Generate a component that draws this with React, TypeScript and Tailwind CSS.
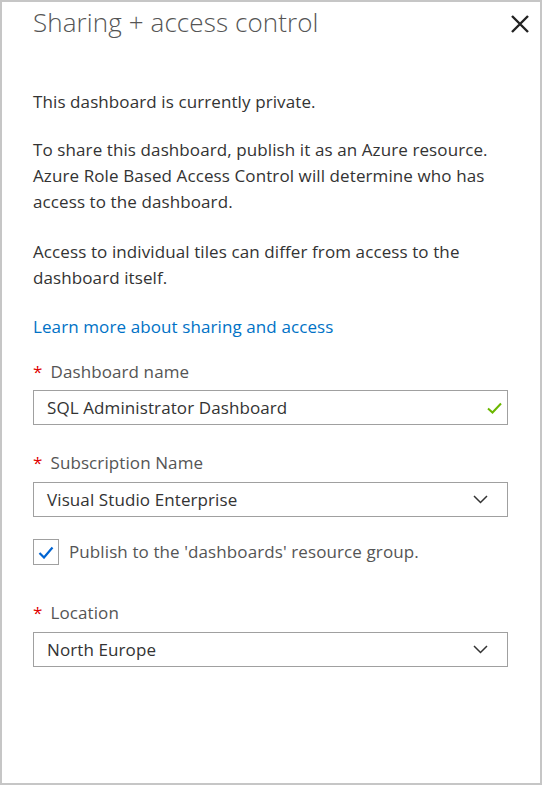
import React from "react";

const Chevron = () => (
  <svg width="15" height="9" viewBox="0 0 15 9" fill="none">
    <path d="M1 1 L7.5 7.5 L14 1" stroke="#333" strokeWidth="1.5" />
  </svg>
);

const Req = () => <span className="text-[#e00000] mr-[8px] text-[17px]">*</span>;

export default function App() {
  return (
    <div
      className="w-[542px] h-[785px] border-2 border-[#c6c6c6] bg-white text-[#333] flex flex-col"
      style={{ fontFamily: '"Open Sans", "Noto Sans", sans-serif' }}
    >
      <div className="flex items-start justify-between pl-[31px] pr-[10px] pt-[2px]">
        <h1 className="text-[26px] font-light leading-[36px] text-[#555] tracking-[0.1px]">
          Sharing + access control
        </h1>
        <svg width="20" height="20" viewBox="0 0 20 20" className="mt-[10px]">
          <path d="M2 2 L18 18 M18 2 L2 18" stroke="#222" strokeWidth="2.4" />
        </svg>
      </div>
      <div className="pl-[31px] pr-[32px] text-[17px] leading-[26px] tracking-[0.1px]">
        <p className="mt-[49px]">This dashboard is currently private.</p>
        <p className="mt-[22px]">
          To share this dashboard, publish it as an Azure resource. Azure Role Based Access Control will determine who has
          access to the dashboard.
        </p>
        <p className="mt-[24px]">
          Access to individual tiles can differ from access to the dashboard itself.
        </p>
        <p className="mt-[23px] text-[#0072c6]">Learn more about sharing and access</p>

        <div className="mt-[19px] text-[#555] leading-[26px] flex items-baseline">
          <Req />
          Dashboard name
        </div>
        <div className="mt-[5px] h-[35px] border border-[#a0a0a0] flex items-center justify-between pl-[13px] pr-[5px]">
          <span className="text-[#333]">SQL Administrator Dashboard</span>
          <svg width="15" height="12" viewBox="0 0 15 12" fill="none">
            <path d="M1 6.5 L5.5 10.5 L14 1.5" stroke="#6bb700" strokeWidth="2" />
          </svg>
        </div>

        <div className="mt-[25px] text-[#555] leading-[26px] flex items-baseline">
          <Req />
          Subscription Name
        </div>
        <div className="mt-[6px] h-[35px] border border-[#a0a0a0] flex items-center justify-between pl-[13px] pr-[19px]">
          <span className="text-[#333]">Visual Studio Enterprise</span>
          <Chevron />
        </div>

        <div className="mt-[22px] flex items-center">
          <div className="w-[26px] h-[26px] border border-[#a0a0a0] flex items-center justify-center">
            <svg width="16" height="13" viewBox="0 0 16 13" fill="none">
              <path d="M1.5 7 L6 11.5 L14.5 1.5" stroke="#0064d2" strokeWidth="2.2" />
            </svg>
          </div>
          <span className="ml-[10px] text-[#555]">Publish to the 'dashboards' resource group.</span>
        </div>

        <div className="mt-[35px] text-[#555] leading-[26px] flex items-baseline">
          <Req />
          Location
        </div>
        <div className="mt-[6px] h-[35px] border border-[#a0a0a0] flex items-center justify-between pl-[13px] pr-[19px]">
          <span className="text-[#333]">North Europe</span>
          <Chevron />
        </div>
      </div>
    </div>
  );
}
